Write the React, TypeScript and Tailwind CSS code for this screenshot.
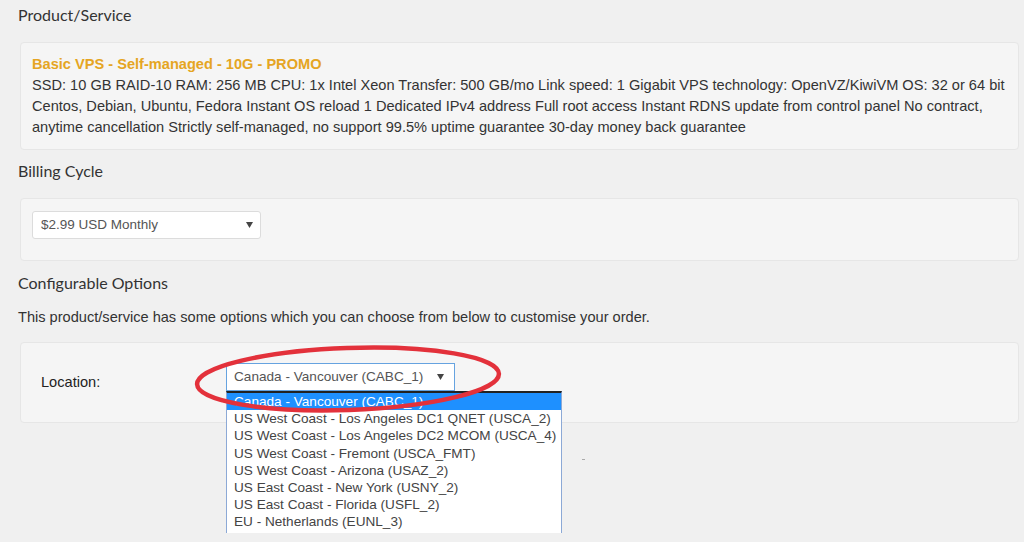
import React from "react";

const headingFont = { fontFamily: 'Lato, "Noto Sans", sans-serif' };

const specLines = [
  "SSD: 10 GB RAID-10 RAM: 256 MB CPU: 1x Intel Xeon Transfer: 500 GB/mo Link speed: 1 Gigabit VPS technology: OpenVZ/KiwiVM OS: 32 or 64 bit",
  "Centos, Debian, Ubuntu, Fedora Instant OS reload 1 Dedicated IPv4 address Full root access Instant RDNS update from control panel No contract,",
  "anytime cancellation Strictly self-managed, no support 99.5% uptime guarantee 30-day money back guarantee",
];

const locations = [
  "Canada - Vancouver (CABC_1)",
  "US West Coast - Los Angeles DC1 QNET (USCA_2)",
  "US West Coast - Los Angeles DC2 MCOM (USCA_4)",
  "US West Coast - Fremont (USCA_FMT)",
  "US West Coast - Arizona (USAZ_2)",
  "US East Coast - New York (USNY_2)",
  "US East Coast - Florida (USFL_2)",
  "EU - Netherlands (EUNL_3)",
];

function Arrow() {
  return (
    <svg width="7" height="6" viewBox="0 0 7 6" className="shrink-0">
      <path d="M0 0 L7 0 L3.5 6 Z" fill="#444" />
    </svg>
  );
}

function Heading({ children, className }: { children: React.ReactNode; className?: string }) {
  return (
    <h2
      className={"text-[16px] leading-[22px] text-[#333] " + (className ?? "")}
      style={headingFont}
    >
      {children}
    </h2>
  );
}

export default function App() {
  return (
    <div
      className="relative w-[1024px] h-[542px] overflow-hidden bg-[#f0f0f0] pl-[18px] pr-[5px] pt-[4px] text-[14.6px] text-[#333]"
      style={{ fontFamily: '"Liberation Sans", Arial, sans-serif' }}
    >
      <Heading>Product/Service</Heading>

      {/* Product card */}
      <div className="mt-[16px] ml-[2px] w-[999px] rounded-[4px] border border-[#e6e6e6] bg-[#f5f5f5] pl-[11px] pr-[8px] pt-[11px] pb-[11px] leading-[21px]">
        <div className="font-bold text-[#e5a523]">Basic VPS - Self-managed - 10G - PROMO</div>
        {specLines.map((l, i) => (
          <div key={i} className="whitespace-nowrap">
            {l}
          </div>
        ))}
      </div>

      <Heading className="mt-[10px]">Billing Cycle</Heading>

      {/* Billing card */}
      <div className="mt-[16px] ml-[2px] w-[999px] rounded-[4px] border border-[#e6e6e6] bg-[#f5f5f5] pl-[11px] pt-[12px] pb-[21px]">
        <div className="flex h-[28px] w-[229px] items-center justify-between rounded-[3px] border border-[#dcdcdc] bg-white pl-[8px] pr-[7px] text-[13.5px] text-[#555]">
          <span>$2.99 USD Monthly</span>
          <Arrow />
        </div>
      </div>

      <Heading className="mt-[11px]">Configurable Options</Heading>
      <p className="mt-[13px] leading-[20px]">
        This product/service has some options which you can choose from below to customise your order.
      </p>

      {/* Options card */}
      <div className="mt-[15px] ml-[2px] flex w-[999px] rounded-[4px] border border-[#e6e6e6] bg-[#f5f5f5] pl-[20px] pt-[20px] pb-[30px]">
        <div className="w-[185px] pt-[9px] leading-[20px] text-[#222]">Location:</div>
        <div className="relative">
          <div className="flex h-[28px] w-[229px] items-center justify-between border border-[#66a3e0] bg-white pl-[7px] pr-[10px] text-[13.6px] text-[#555]">
            <span>Canada - Vancouver (CABC_1)</span>
            <Arrow />
          </div>

          {/* Open dropdown list */}
          <div className="absolute left-0 top-[28px] z-10 h-[142px] w-[336px] overflow-hidden border-x border-[#8ca9d6] border-t-2 border-t-[#222] bg-white">
            {locations.map((loc, i) => (
              <div
                key={loc}
                className={
                  "h-[17.2px] whitespace-nowrap pl-[7px] text-[13.6px] leading-[17px] " +
                  (i === 0 ? "bg-[#1e90ff] text-white" : "text-[#444]")
                }
              >
                {loc}
              </div>
            ))}
          </div>
        </div>
      </div>

      {/* stray mark */}
      <div className="absolute left-[582px] top-[459px] h-[1px] w-[3px] bg-[#aaa]" />

      {/* red annotation ellipse */}
      <svg
        className="pointer-events-none absolute left-[190px] top-[340px] z-20"
        width="320"
        height="80"
        viewBox="0 0 320 80"
      >
        <ellipse
          cx="158"
          cy="39"
          rx="151"
          ry="31"
          fill="none"
          stroke="#e3313b"
          strokeWidth="4.5"
          transform="rotate(-2 158 39)"
        />
      </svg>
    </div>
  );
}
